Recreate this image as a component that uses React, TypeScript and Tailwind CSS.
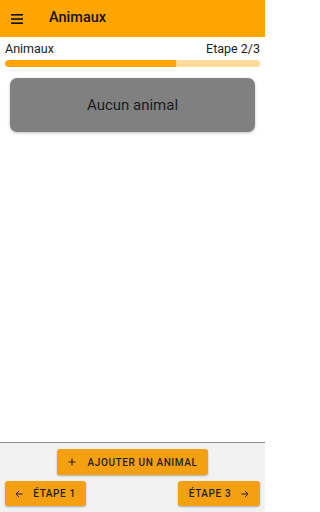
import React from "react";

function Hamburger() {
  return (
    <svg width="12" height="10" viewBox="0 0 12 10" fill="none">
      <rect x="0" y="0" width="12" height="1.6" fill="#111" />
      <rect x="0" y="4.2" width="12" height="1.6" fill="#111" />
      <rect x="0" y="8.4" width="12" height="1.6" fill="#111" />
    </svg>
  );
}

function Plus() {
  return (
    <svg width="8" height="8" viewBox="0 0 8 8" fill="none">
      <path d="M4 0.5V7.5M0.5 4H7.5" stroke="#222" strokeWidth="1.1" />
    </svg>
  );
}

function ArrowLeft() {
  return (
    <svg width="8" height="8" viewBox="0 0 8 8" fill="none">
      <path d="M7.5 4H1M4 1L1 4L4 7" stroke="#222" strokeWidth="1" />
    </svg>
  );
}

function ArrowRight() {
  return (
    <svg width="8" height="8" viewBox="0 0 8 8" fill="none">
      <path d="M0.5 4H7M4 1L7 4L4 7" stroke="#222" strokeWidth="1" />
    </svg>
  );
}

export default function App() {
  return (
    <div className="w-[265px] h-[512px] flex flex-col bg-white font-['Roboto','Liberation_Sans',sans-serif] text-[#111]">
      <header className="h-[37px] bg-[#ffa500] flex items-center pl-[11px] shrink-0">
        <Hamburger />
        <span className="ml-[26px] text-[14.5px] font-medium leading-none">Animaux</span>
      </header>
      <main className="flex-1 flex flex-col px-[5px]">
        <div className="flex justify-between text-[12.5px] leading-[14px] mt-[5px] text-[#222]">
          <span>Animaux</span>
          <span>Etape 2/3</span>
        </div>
        <div className="mt-[4px] h-[7px] rounded-full bg-[#ffdb99] overflow-hidden">
          <div className="h-full w-[67%] bg-[#ffa500] rounded-l-full" />
        </div>
        <div className="mx-[5px] mt-[11px] h-[54px] rounded-[7px] bg-[#808080] shadow-[0_1px_3px_rgba(0,0,0,0.25)] flex items-center justify-center text-[15px] text-[#1c1c1c]">
          Aucun animal
        </div>
      </main>
      <footer className="h-[70px] shrink-0 border-t border-[#8a8a8a] bg-[#f2f2f2] flex flex-col px-[5px] pt-[6px]">
        <div className="flex justify-center">
          <button className="h-[26px] w-[151px] rounded-[3px] bg-[#f4a010] shadow-[0_1px_2px_rgba(0,0,0,0.3)] flex items-center justify-center gap-[12px] text-[10px] font-medium tracking-[0.6px] text-[#222]">
            <Plus />
            <span>AJOUTER UN ANIMAL</span>
          </button>
        </div>
        <div className="flex justify-between mt-[6px]">
          <button className="h-[25px] w-[81px] rounded-[3px] bg-[#f4a010] shadow-[0_1px_2px_rgba(0,0,0,0.3)] flex items-center justify-center gap-[10px] text-[10px] font-medium tracking-[0.6px] text-[#222]">
            <ArrowLeft />
            <span>ÉTAPE 1</span>
          </button>
          <button className="h-[25px] w-[82px] rounded-[3px] bg-[#f4a010] shadow-[0_1px_2px_rgba(0,0,0,0.3)] flex items-center justify-center gap-[10px] text-[10px] font-medium tracking-[0.6px] text-[#222]">
            <span>ÉTAPE 3</span>
            <ArrowRight />
          </button>
        </div>
      </footer>
    </div>
  );
}
